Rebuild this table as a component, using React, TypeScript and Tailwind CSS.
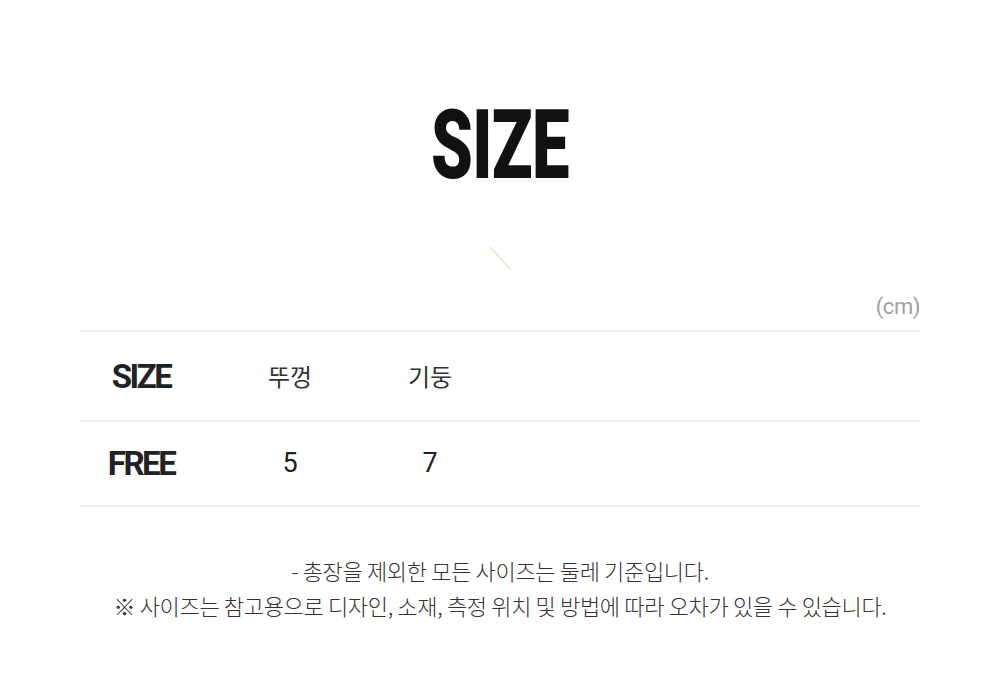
export default function App() {
  return (
    <div className="w-[1000px] h-[687px] bg-white overflow-hidden" style={{ fontFamily: 'Roboto, "Noto Sans CJK KR", sans-serif' }}>
      {/* Title */}
      <div className="pt-[97px] flex justify-center">
        <h1 className="text-[97px] leading-none font-black text-[#111] scale-x-[0.69] tracking-[-0.01em]">SIZE</h1>
      </div>

      {/* decorative stroke */}
      <div className="flex justify-center mt-[52px]">
        <svg width="24" height="24" viewBox="0 0 24 24" className="ml-[2px]">
          <line x1="1" y1="1" x2="21" y2="23" stroke="#ebe4cf" strokeWidth="1.8" />
        </svg>
      </div>

      {/* unit */}
      <div className="mx-[80px] mt-[24px] flex justify-end">
        <span className="text-[22px] leading-[26px] text-[#a0a0a0] tracking-[-0.02em]">(cm)</span>
      </div>

      {/* Table */}
      <div className="mx-[80px] mt-[10px] border-t-2 border-[#f0f0f0]">
        <div className="flex h-[90px] items-center border-b-2 border-[#f0f0f0]">
          <div className="w-[122px] text-center text-[33px] font-bold tracking-[-0.075em] text-[#222] pt-[1px]">SIZE</div>
          <div className="w-[176px] text-center text-[24px] text-[#333]" style={{ fontFamily: '"Noto Sans CJK KR", sans-serif' }}>뚜껑</div>
          <div className="w-[104px] text-center text-[24px] text-[#333]" style={{ fontFamily: '"Noto Sans CJK KR", sans-serif' }}>기둥</div>
        </div>
        <div className="flex h-[85px] items-center border-b-2 border-[#f0f0f0]">
          <div className="w-[122px] text-center text-[33px] font-bold tracking-[-0.075em] text-[#222]">FREE</div>
          <div className="w-[176px] text-center text-[27px] text-[#222]">5</div>
          <div className="w-[104px] text-center text-[27px] text-[#222]">7</div>
        </div>
      </div>

      {/* Notes */}
      <div className="mt-[46px] text-center text-[22px] leading-[35px] text-[#333] tracking-[-0.015em] font-light" style={{ fontFamily: '"Noto Sans CJK KR", sans-serif' }}>
        <p>- 총장을 제외한 모든 사이즈는 둘레 기준입니다.</p>
        <p>※ 사이즈는 참고용으로 디자인, 소재, 측정 위치 및 방법에 따라 오차가 있을 수 있습니다.</p>
      </div>
    </div>
  );
}
